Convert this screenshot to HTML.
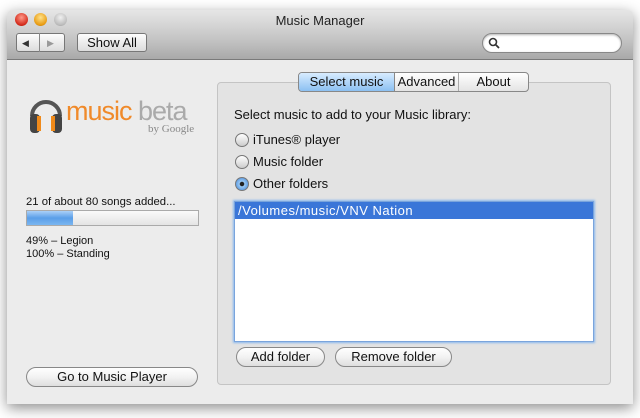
<!DOCTYPE html>
<html><head><style>
*{box-sizing:border-box;margin:0;padding:0}
body{width:640px;height:418px;background:#fff;position:relative;overflow:hidden;font-family:"Liberation Sans",sans-serif;font-size:12px;color:#111}
.win{position:absolute;left:7px;top:10px;width:626px;height:394px;background:#ececec;border-radius:5px 5px 0 0;box-shadow:0 4px 14px rgba(0,0,0,.45);overflow:hidden}
.tb{position:absolute;left:0;top:0;width:626px;height:50px;background:linear-gradient(#e6e6e6,#c4c4c4 60%,#a9a9a9);border-bottom:1px solid #7a7a7a}
.title{position:absolute;top:3px;width:100%;text-align:center;font-size:13px;color:#222}
.dot{position:absolute;top:3px;width:13px;height:13px;border-radius:50%}
.btn{position:absolute;border:1px solid #777;background:linear-gradient(#fdfdfd,#dcdcdc);text-align:center;font-size:12px;color:#111}
.rb{position:absolute;border:1px solid #888;border-radius:11px;background:linear-gradient(#fff,#f2f2f2 50%,#dedede);text-align:center;font-size:13px;line-height:18px}
.abs{position:absolute}
.lbl{position:absolute;font-size:13px}
.radio{position:absolute;width:14px;height:14px;border-radius:50%;border:1px solid #777;background:linear-gradient(#fff,#ccc)}
</style></head><body>
<div class="win">
 <div class="tb">
  <div class="dot" style="left:8px;background:radial-gradient(circle at 50% 35%,#ff9a8a,#d42a1a 70%,#8a1a10)"></div>
  <div class="dot" style="left:27px;background:radial-gradient(circle at 50% 35%,#ffe28a,#e89a10 70%,#9a6010)"></div>
  <div class="dot" style="left:47px;background:radial-gradient(circle at 50% 35%,#f0f0f0,#bbb 70%,#888)"></div>
  <div class="title">Music Manager</div>
  <div class="btn" style="left:9px;top:23px;width:49px;height:19px;border-radius:3px"></div>
  <div class="abs" style="left:32px;top:23px;width:1px;height:19px;background:#888"></div>
  <div class="abs" style="left:15px;top:28px;font-size:9px;color:#333">◀</div>
  <div class="abs" style="left:40px;top:28px;font-size:9px;color:#999">▶</div>
  <div class="btn" style="left:70px;top:23px;width:70px;height:19px;border-radius:3px;line-height:17px;font-size:13px">Show All</div>
  <div class="abs" style="left:475px;top:23px;width:140px;height:20px;border-radius:10px;background:#fff;border:1px solid #888;box-shadow:inset 0 1px 2px rgba(0,0,0,.3)"></div>
  <svg class="abs" style="left:481px;top:27px" width="12" height="12"><circle cx="5" cy="5" r="3.5" fill="none" stroke="#333" stroke-width="1.6"/><line x1="7.5" y1="7.5" x2="11" y2="11" stroke="#333" stroke-width="1.8"/></svg>
 </div>
 <svg class="abs" style="left:20px;top:84px" width="38" height="40"><path d="M5 22 A14 14 0 0 1 33 22" fill="none" stroke="#555" stroke-width="4"/><rect x="3" y="20" width="10" height="19" rx="4" fill="#444"/><rect x="25" y="20" width="10" height="19" rx="4" fill="#444"/><rect x="10" y="22" width="4" height="15" fill="#f08a1a"/><rect x="24" y="22" width="4" height="15" fill="#f08a1a"/></svg>
 <div class="abs" style="left:59px;top:86px;font-size:27px;letter-spacing:-1px;color:#f08a2a">music <span style="color:#aaa">beta</span></div>
 <div class="abs" style="left:141px;top:113px;font-size:11px;color:#888;font-family:'Liberation Serif',serif">by Google</div>
 <div class="abs" style="left:19px;top:186px;font-size:11.3px">21 of about 80 songs added...</div>
 <div class="abs" style="left:19px;top:200px;width:173px;height:16px;border:1px solid #aaa;background:linear-gradient(#fafafa,#e4e4e4)"><div style="width:46px;height:14px;background:linear-gradient(#aad0f8,#5a9ee8 50%,#7ab6f0)"></div></div>
 <div class="abs" style="left:19px;top:225px;font-size:11px;line-height:13px">49% – Legion<br>100% – Standing</div>
 <div class="rb" style="left:19px;top:357px;width:172px;height:20px">Go to Music Player</div>
 <div class="abs" style="left:210px;top:72px;width:394px;height:303px;border:1px solid #c4c4c4;border-radius:4px;background:#e3e3e3"></div>
 <div class="abs" style="left:291px;top:62px;width:231px;height:20px;border:1px solid #888;border-radius:4px;background:linear-gradient(#fff,#e4e4e4);font-size:13px;line-height:18px;display:flex">
  <div style="width:96px;text-align:center;background:linear-gradient(#d8ecff,#8cc0f2);border-right:1px solid #888;border-radius:3px 0 0 3px">Select music</div>
  <div style="width:64px;text-align:center;border-right:1px solid #aaa">Advanced</div>
  <div style="flex:1;text-align:center">About</div>
 </div>
 <div class="lbl" style="left:227px;top:97px">Select music to add to your Music library:</div>
 <div class="radio" style="left:228px;top:123px"></div><div class="lbl" style="left:246px;top:122px">iTunes® player</div>
 <div class="radio" style="left:228px;top:145px"></div><div class="lbl" style="left:246px;top:144px">Music folder</div>
 <div class="radio" style="left:228px;top:167px;background:radial-gradient(circle,#222 2px,#9ccaf4 2.5px,#3b82d8)"></div><div class="lbl" style="left:246px;top:166px">Other folders</div>
 <div class="abs" style="left:227px;top:191px;width:360px;height:141px;border:1px solid #7aa4dc;box-shadow:0 0 2px 1px #8ab8ee;background:#fff">
  <div style="height:17px;background:#3a76d8;color:#fff;padding-left:3px;font-size:13px;letter-spacing:.5px;line-height:17px">/Volumes/music/VNV Nation</div>
 </div>
 <div class="rb" style="left:229px;top:337px;width:89px;height:20px">Add folder</div>
 <div class="rb" style="left:328px;top:337px;width:117px;height:20px">Remove folder</div>
</div>
</body></html>
